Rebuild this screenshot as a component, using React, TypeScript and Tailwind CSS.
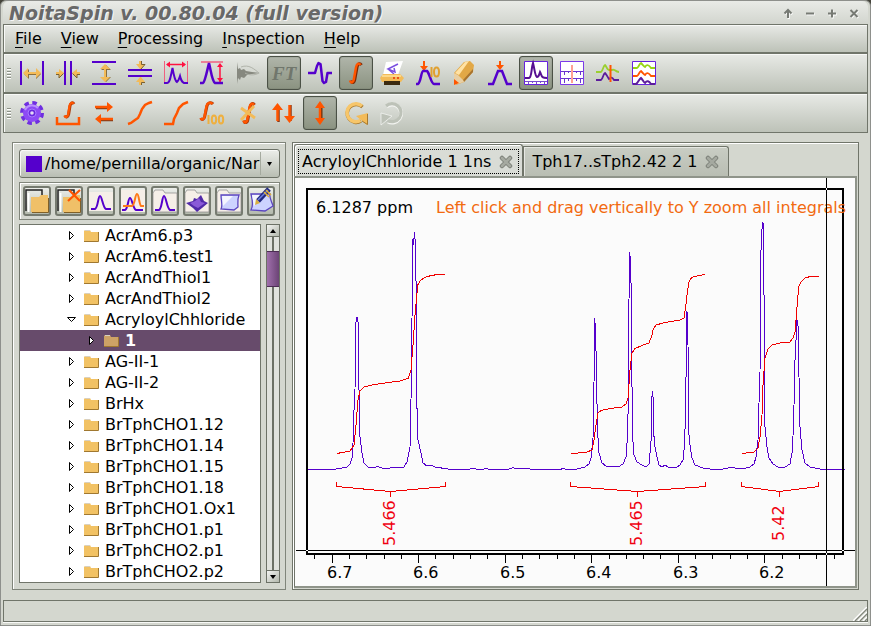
import type { ReactNode } from "react";

const VIOLET = "#5500cc";
const GOLD = "#f3bb58";
const FLAME = "#ff5500";
const CRIMSON = "#ff1040";

function Icon({ children }: { children: ReactNode }) {
  return (
    <svg viewBox="0 0 24 24" className="size-6 shrink-0 overflow-visible" aria-hidden="true" fill="none">
      {children}
    </svg>
  );
}

const integralPath = "M8 19.500c.8 3 3.200 2.500 3.800-1L14 6.500C14.600 2.800 16.800 1.500 18.500 4";

type Tool = { label: string; icon: ReactNode; active?: boolean };

const mainTools: Tool[] = [
  {
    label: "Expand horizontally",
    icon: (
      <>
        <path d="M1 0v24M23 0v24" stroke={VIOLET} strokeWidth="2" />
        <path d="M4 13l5-5v4h7V8l5 5-5 5v-4H9v4z" fill="#8a7040" />
        <path d="M3 12l5-5v4h8V7l5 5-5 5v-4H8v4z" fill={GOLD} />
      </>
    ),
  },
  {
    label: "Compress horizontally",
    icon: (
      <>
        <path d="M9 0v24M15 0v24" stroke={VIOLET} strokeWidth="2" />
        <path d="M0 11h3V8l5 4-5 5v-4H0zM24 11h-3V8l-5 4 5 5v-4h3z" fill={GOLD} />
        <path d="M0 13.500h3V17l4.500-4.500M24 13.500h-3V17l-4.500-4.500" stroke="#7a6030" strokeWidth="1" />
      </>
    ),
  },
  {
    label: "Expand vertically",
    icon: (
      <>
        <path d="M0 1h24M0 23h24" stroke={VIOLET} strokeWidth="2" />
        <path d="M14 4l5 5h-4v7h4l-5 5-5-5h4V9H9z" fill="#8a7040" />
        <path d="M13 3l5 5h-4v8h4l-5 5-5-5h4V8H8z" fill={GOLD} />
      </>
    ),
  },
  {
    label: "Compress vertically",
    icon: (
      <>
        <path d="M0 9h24M0 15h24" stroke={VIOLET} strokeWidth="2" />
        <path d="M11 0h2v3h4l-4 5H12L8 3h3zM11 24h2v-3h4l-4-5H12l-4 5h3z" fill={GOLD} />
        <path d="M13.500 0v3.500H17L13 8M13.500 24v-2.500H17" stroke="#7a6030" />
      </>
    ),
  },
  {
    label: "Zoom region",
    icon: (
      <>
        <path d="M.5 0v22M23.500 0v22" stroke="#f06080" />
        <path d="M3 3.500h18" stroke={CRIMSON} strokeWidth="1.500" />
        <path d="M2 3.500l4-3v6zM22 3.500l-4-3v6z" fill={CRIMSON} />
        <path d="M0 22h3c3 0 3.500-6 5.500-15 1.500 9 2.500 13 4.500 14 1.500-1 2-3 3-6 1 4 1.500 6 4 7h4" stroke={VIOLET} strokeWidth="2" />
      </>
    ),
  },
  {
    label: "Fit height",
    icon: (
      <>
        <path d="M1 1h22" stroke="#f06080" strokeWidth="1.500" />
        <path d="M20 3v18" stroke={CRIMSON} strokeWidth="1.500" />
        <path d="M20 2l3 4h-6zM20 21l3-4h-6z" fill={CRIMSON} />
        <path d="M0 22h3c2-1 4-12 6-20 2 8 3 18 6 20h8" stroke={VIOLET} strokeWidth="2.500" />
      </>
    ),
  },
  {
    label: "Free induction decay",
    icon: (
      <>
        <path d="M1 1v22l1-6 2 2 1-3 3 1 3-3 5-1 8-1-8-1-6-1-2-2-3 1-1-2-2 1z" fill="#86887f" />
        <path d="M5 6c8-3 13 2 18 6-5 3-11 2-14 0" stroke="#b0b3aa" />
      </>
    ),
  },
  {
    label: "Fourier transform",
    active: true,
    icon: (
      <text x="0" y="19" fontFamily="Liberation Serif, serif" fontStyle="italic" fontWeight="bold" fontSize="19" fill="#70766c">
        FT
      </text>
    ),
  },
  {
    label: "Phase correction",
    icon: <path d="M0 12h7l2-7 1.500-3 2 1 2 17 1.500 2 2-1 1.500-9H24" stroke={VIOLET} strokeWidth="2.500" strokeLinejoin="round" />,
  },
  {
    label: "Integrate",
    active: true,
    icon: (
      <>
        <path d={integralPath} transform="translate(-1 0)" stroke="#7a2a08" strokeWidth="3" />
        <path d={integralPath} transform="translate(-2 0)" stroke={FLAME} strokeWidth="2.500" />
      </>
    ),
  },
  {
    label: "Print",
    icon: (
      <>
        <path d="M6 1l17-1-5 14H3z" fill="#fff" />
        <path d="M18 3l-10 5 7 3-1-4M8 8l6 5" stroke="#7a50e0" strokeWidth="1.500" />
        <path d="M3 13h17l4 4-3 4H2l-2-4z" fill={GOLD} />
        <path d="M2 15h19" stroke="#ffe29a" strokeWidth="1.500" />
        <path d="M13 17h2M17 17h2" stroke="#e83000" strokeWidth="1.500" />
        <path d="M4 20h16v4H4z" fill="#3b2a10" />
      </>
    ),
  },
  {
    label: "Peak picking threshold",
    icon: (
      <>
        <path d="M8 0v6" stroke={FLAME} strokeWidth="2" />
        <path d="M4 5h8L8 10z" fill={FLAME} />
        <path d="M0 23h2c3-2 3-12 5-13h4c3 3 4 13 7 13h6" stroke={VIOLET} strokeWidth="2.500" />
        <path d="M15.500 6V16" stroke="#e0a030" strokeWidth="2" />
        <ellipse cx="20.500" cy="11" rx="2.500" ry="4.500" stroke="#e0a030" strokeWidth="2" />
      </>
    ),
  },
  {
    label: "Annotate",
    icon: (
      <>
        <path d="M2 12L12 1l6-1 4 4-1 7-9 10-8 3z" fill="#e2a846" />
        <path d="M3 12L13 1l4-1L7 14z" fill="#ffe2a4" />
        <path d="M11 19L21 8v3l-9 10z" fill="#a87430" />
        <path d="M2 12l4 2 5 5 1 2-10 3z" fill="#e8cfa4" />
        <path d="M2 18l5 4-5 2z" fill={FLAME} />
      </>
    ),
  },
  {
    label: "Pick peak",
    icon: (
      <>
        <path d="M12 0v5" stroke={FLAME} strokeWidth="2" />
        <path d="M8 4h8l-4 5z" fill={FLAME} />
        <path d="M0 23h5l5-13h4l5 13h5" stroke={VIOLET} strokeWidth="2.500" />
      </>
    ),
  },
  {
    label: "Spectrum with scale",
    active: true,
    icon: (
      <>
        <path d="M.5.5h23v23H.5z" fill="#fff" stroke="#6622dd" />
        <path d="M1 17h4c3-1 2-9 4-15 2 8 2 13 4 14 2 0 2-2 3-5 2 4 1 6 7 6" stroke="#560f91" strokeWidth="2" />
        <path d="M1 20.500h22M4.500 20v3M8.500 20v2M12.500 20v3M16.500 20v2M20.500 20v3" stroke="#7a4ad0" />
      </>
    ),
  },
  {
    label: "Cursor scale",
    icon: (
      <>
        <path d="M.5.500h23v23H.5z" fill="#fff" stroke="#7b3be8" />
        <path d="M1 10.500h22M1 17.500h22M4.500 10v4M8.500 10v2M16.500 10v2M20.500 10v4M4.500 18v4M8.500 18v2M16.500 18v2M20.500 18v4" stroke="#6a35d0" />
        <path d="M12 4v18" stroke="#ffa090" strokeWidth="2" />
      </>
    ),
  },
  {
    label: "Align spectra",
    icon: (
      <>
        <path d="M0 11h5c2-1 2-6 4-7 2 2 2 5 4 5h3c2-2 3 2 7 2" stroke="#9ad030" strokeWidth="1.800" />
        <path d="M0 19h5c2-1 2-6 4-7 2 2 3 5 4 6 2-2 3-2 5 1h5" stroke="#5c1c9c" strokeWidth="1.800" />
        <path d="M14.500 4v17" stroke={FLAME} strokeWidth="2" />
      </>
    ),
  },
  {
    label: "Stack spectra",
    icon: (
      <>
        <path d="M.5.500h23v23H.5z" fill="#fff" stroke="#6622dd" />
        <path d="M1 7h4c2-1 2-4 4-5 2 2 3 4 4 4 2-3 4-2 6 1h4" stroke="#95d514" strokeWidth="1.800" />
        <path d="M1 15h4c2-1 2-4 4-5 2 2 3 4 4 4 2-3 4-2 6 1h4" stroke={FLAME} strokeWidth="1.800" />
        <path d="M1 23h3c2-1 3-5 5-6 2 2 3 5 4 5 2-3 4-2 6 1h4" stroke="#5c1c9c" strokeWidth="2" />
      </>
    ),
  },
];

const integralTools: Tool[] = [
  {
    label: "Integral settings",
    icon: (
      <>
        <circle cx="12" cy="12" r="9.500" stroke="#6f2fe0" strokeWidth="5" strokeDasharray="4.200 3.260" />
        <circle cx="12" cy="12" r="9" fill="#8d4af5" />
        <path d="M5 9a8 8 0 0 1 13-2" stroke="#ba91ff" strokeWidth="2" />
        <circle cx="12" cy="12" r="4" fill="#6a28dd" stroke="#a77aff" />
        <circle cx="12" cy="12" r="1.800" fill="#e3dbf5" />
      </>
    ),
  },
  {
    label: "Integrate region",
    icon: (
      <>
        <path d="M1 16v7h22v-7" stroke={FLAME} strokeWidth="2.500" />
        <path d="M9 14.500c1 2.500 3 1.500 3.600-1L14 5c.6-3 2.500-4.500 4-2" stroke="#a83808" strokeWidth="3" />
        <path d="M8.500 14.500c1 2.500 3 1.500 3.600-1L13.500 5c.6-3 2.500-4.500 4-2" stroke={FLAME} strokeWidth="2.300" />
      </>
    ),
  },
  {
    label: "Swap integrals",
    icon: (
      <>
        <path d="M4 7h14M7 19h14" stroke="#7a3a18" strokeWidth="2.500" />
        <path d="M3 6h14M8 18h13" stroke={FLAME} strokeWidth="2.500" />
        <path d="M15 1l6 5-6 5zM9 13l-6 5 6 5z" fill={FLAME} />
      </>
    ),
  },
  {
    label: "Slope correction",
    icon: <path d="M0 23l3-1 4-3 3-2 2-4 2-5 3-4 4-2 3-1" stroke={FLAME} strokeWidth="2.500" />,
  },
  {
    label: "Bias correction",
    icon: <path d="M0 23h9l1-5 3-6 2-5 4-4 5-2" stroke={FLAME} strokeWidth="2.500" />,
  },
  {
    label: "Normalise to 100",
    icon: (
      <>
        <path d="M1 17c.8 2.500 3 1.500 3.600-1L7 5c.6-3 4-4.500 6-2" stroke="#a83808" strokeWidth="3" />
        <path d="M.8 17c.8 2.500 3 1.500 3.600-1L6.500 5c.6-3 4-4.500 6-2" stroke={FLAME} strokeWidth="2.500" />
        <path d="M8.500 14v9" stroke="#eeb040" strokeWidth="2" />
        <ellipse cx="14" cy="18.500" rx="2.200" ry="4" stroke="#eeb040" strokeWidth="2" />
        <ellipse cx="21" cy="18.500" rx="2.200" ry="4" stroke="#eeb040" strokeWidth="2" />
      </>
    ),
  },
  {
    label: "Delete integral",
    icon: (
      <>
        <path d={integralPath} stroke="#a83808" strokeWidth="3.200" />
        <path d={integralPath} transform="translate(-.5 0)" stroke={FLAME} strokeWidth="2.500" />
        <path d="M5 7l14 10M18 5L5 19" stroke={GOLD} strokeWidth="2.800" />
      </>
    ),
  },
  {
    label: "Sort integrals",
    icon: (
      <>
        <path d="M6.500 5v16M18.500 4v16" stroke="#8a3a18" strokeWidth="2.500" />
        <path d="M5.500 5v15M17.500 4v15" stroke={FLAME} strokeWidth="2.500" />
        <path d="M5.500 2l5.500 7H0zM17.500 22L12 15h11z" fill={FLAME} />
      </>
    ),
  },
  {
    label: "Scale all integrals",
    active: true,
    icon: (
      <>
        <path d="M13 5v15" stroke="#68300c" strokeWidth="3" />
        <path d="M12 5v14" stroke={FLAME} strokeWidth="2.500" />
        <path d="M12 0l5 7H7zM12 24l5-7H7z" fill={FLAME} />
      </>
    ),
  },
  {
    label: "Undo",
    icon: (
      <>
        <path d="M18.500 6A9 9 0 1 0 17 20" stroke="#a77a30" strokeWidth="3.500" />
        <path d="M18 5A9 9 0 1 0 16.500 19.500" stroke="#f7c66a" strokeWidth="3.500" />
        <path d="M12 15l12-3-1 12z" fill={GOLD} />
        <path d="M23.500 13v10.500L18 20" stroke="#a77a30" />
      </>
    ),
  },
  {
    label: "Redo",
    icon: (
      <>
        <path d="M6.500 5.500A9 9 0 1 1 8 20.500" stroke="#f3f4f1" strokeWidth="4" />
        <path d="M6 5A9 9 0 1 1 7.500 19.500" stroke="#bdc2b8" strokeWidth="3.200" />
        <path d="M12 15L1 12v12z" fill="#bdc2b8" stroke="#f3f4f1" strokeWidth=".8" />
      </>
    ),
  },
];

function ToolBar({ tools, name }: { tools: Tool[]; name: string }) {
  return (
    <div role="toolbar" aria-label={name} className="flex h-10 items-center border border-[#70756a] bg-linear-to-b from-[#e8eae6] to-[#bdc2b8] shadow-[inset_1px_1px_0_#f8f9f7]">
      <div className="flex w-[11px] flex-col gap-px pl-[3px]">
        {[0, 1, 2, 3].map((n) => (
          <span key={n} className="h-px w-1 border-b border-white bg-[#8d9287] pb-px" />
        ))}
      </div>
      <div className="flex gap-0.5">
        {tools.map((tool) => (
          <button
            key={tool.label}
            type="button"
            aria-label={tool.label}
            aria-pressed={!!tool.active}
            className={
              tool.active
                ? "flex h-[34px] w-[34px] items-center justify-center rounded-[3px] border border-[#4b5146] bg-linear-to-b from-[#b0b5aa] to-[#8b9381] shadow-[inset_0_0_1px_#4b5146]"
                : "flex h-[34px] w-[34px] items-center justify-center"
            }
          >
            <Icon>{tool.icon}</Icon>
          </button>
        ))}
      </div>
    </div>
  );
}

const folderBack = (
  <>
    <path d="M1 22V1h16v5" stroke="#222" strokeWidth="1.500" />
    <path d="M3.500 4v19" stroke="#fff" strokeWidth="2" />
    <path d="M6 8h8l2-2h7v17H6z" fill="#f0c068" />
    <path d="M23.500 9v14.500H7" stroke="#806028" />
  </>
);

const browserTools: Tool[] = [
  { label: "Show folders", icon: folderBack },
  {
    label: "Close folder",
    icon: (
      <>
        {folderBack}
        <path d="M12 1l11 11M23 1L11 12" stroke={FLAME} strokeWidth="2.200" />
      </>
    ),
  },
  {
    label: "Single spectrum",
    icon: (
      <>
        <path d="M0 3h24v19H0z" fill="#f6efe8" />
        <path d="M2 20h4c3-1 3-13 5-13s3 12 6 13h5" stroke={VIOLET} strokeWidth="2" />
      </>
    ),
  },
  {
    label: "Overlay spectra",
    icon: (
      <>
        <path d="M0 1h24v22H0z" fill="#f6efe8" />
        <path d="M1 21h3c3-1 3-12 5-12s3 11 6 12h7" stroke={VIOLET} strokeWidth="2" />
        <path d="M2 17h9c3-1 3-12 5-12s2 10 4 12h3" stroke="#ff7a18" strokeWidth="2" />
      </>
    ),
  },
  {
    label: "Folder spectrum",
    icon: (
      <>
        <path d="M0 4l2-3h8l2 3h12v19H0z" fill="#f6efe8" stroke="#888" strokeWidth=".7" />
        <path d="M2 21h4c3-1 3-14 5-14s3 13 6 14h5" stroke={VIOLET} strokeWidth="2" />
      </>
    ),
  },
  {
    label: "Two-dimensional spectrum",
    icon: (
      <>
        <path d="M0 4l2-3h8l2 3h12v19H0z" fill="#f6efe8" stroke="#888" strokeWidth=".7" />
        <path d="M1 14l7-2 1-3 3 1 4-4 3 6 4 2-6 5-5 4-4-4z" fill="#512aa8" />
        <path d="M5 14l5-2 4-3 2 4 4 1-7 5-4-2z" fill="#8a5ad8" />
      </>
    ),
  },
  {
    label: "Notes",
    icon: (
      <>
        <path d="M0 4l2-3h8l2 3h12v19H0z" fill="#f6efe8" stroke="#888" strokeWidth=".7" />
        <path d="M4 6h18c-2 5-1 8-1 12l-4 3-13-1c2-4 0-8 0-14z" fill="#cdd3ff" stroke="#5b45c0" strokeWidth="1.300" />
        <path d="M5 7h11L6 17z" fill="#f4f5ff" />
      </>
    ),
  },
  {
    label: "Edit notes",
    icon: (
      <>
        <path d="M2 5h19c-1 4 2 8 3 12l-8 5-14-1c3-5 1-11 0-16z" fill="#cdd3ff" stroke="#5b45c0" strokeWidth="1.300" />
        <path d="M3 6h12L5 17z" fill="#f4f5ff" />
        <path d="M20 0L9 12" stroke="#222a80" strokeWidth="5" />
        <path d="M19 1L9 11" stroke="#6f80e0" strokeWidth="1.500" />
        <path d="M17 1l5 5M15 3l5 5" stroke="#e0b030" strokeWidth="1.500" />
        <path d="M7 10l4 4-5 2z" fill="#d8b040" />
      </>
    ),
  },
];

type Entry = { name: string; open?: boolean; child?: boolean };
const entries: Entry[] = [
  { name: "AcrAm6.p3" },
  { name: "AcrAm6.test1" },
  { name: "AcrAndThiol1" },
  { name: "AcrAndThiol2" },
  { name: "AcryloylChhloride", open: true },
  { name: "1", child: true },
  { name: "AG-II-1" },
  { name: "AG-II-2" },
  { name: "BrHx" },
  { name: "BrTphCHO1.12" },
  { name: "BrTphCHO1.14" },
  { name: "BrTphCHO1.15" },
  { name: "BrTphCHO1.18" },
  { name: "BrTphCHO1.Ox1" },
  { name: "BrTphCHO1.p1" },
  { name: "BrTphCHO2.p1" },
  { name: "BrTphCHO2.p2" },
];

function TreeRow({ entry }: { entry: Entry }) {
  return (
    <li role="treeitem" aria-selected={!!entry.child} aria-expanded={!!entry.open}>
      <button
        type="button"
        className={
          entry.child
            ? "flex h-[21px] w-full items-center bg-[#674b6b] pl-[66px] text-left font-bold text-white"
            : "flex h-[21px] w-full items-center pl-[46px] text-left"
        }
      >
        <svg viewBox="0 0 12 11" className="mr-1.5 h-[11px] w-3 shrink-0" aria-hidden="true">
          {entry.open ? (
            <path d="M1.500 3.500h8L5.500 7.500z" fill="#fff" stroke="#000" />
          ) : (
            <path d="M3.500 1.500v8l4-4z" fill="#fff" stroke="#000" />
          )}
        </svg>
        <svg viewBox="0 0 15 13" className="mr-1.5 h-[13px] w-[15px] shrink-0" aria-hidden="true">
          <path d="M0 2l1-1h5l1 2h7v9H0z" fill={entry.child ? "#cda266" : "#f2c264"} />
          <path d="M1 1.500h5" stroke="#d8d0c0" />
          <path d="M0 12.500h14.500V3" fill="none" stroke="#a07830" />
        </svg>
        {entry.name}
      </button>
    </li>
  );
}

const spectrum =
  "307,469 336,469 342,468 347,467 350,464 352,458 353,443 353.500,420 355,390 355.500,325 357,317 358.500,325 359,390 360,437 362,453 364,463 368,467 373,468 378,466.500 382,468 390,468 398,467.500 404,467 407,462 410,447 411,400 412,320 412.500,239 413.500,245 414.500,232 415.300,243 416.500,307 416.700,398 418,440 421,453 423,463 427,466 431,465 435,467 448,469 470,469 474,468.500 480,470 486,468.500 490,469.500 508,469.500 513,467.500 517,469 526,468.500 534,469.500 560,469.500 563,468.500 567,469.500 577,469 585,467 589,464 591,458 593,438 594,383 594.700,318 595.700,333 596.700,390 597.700,433 599,453 602,463 606,466 618,467 623,464 626,457 627.700,433 628.500,385 629.300,252 630.500,258 631.300,297 632,387 632.500,435 634,455 637,462 642,465 646,467 649,464 650,453 651.300,437 651.500,402 652.500,391 653.500,402 653.700,433 655,447 657,457 659,465 662,467 665,465 668,467 677,467 680,465 683,460 684.700,443 685.700,398 687,311 688,345 688.700,432 690,445 692,458 695,465 703,468 710,469 723,469 731,467.500 742,469 750,467 754,464 756,457 758,440 759,403 760,375 760.500,265 761.500,237 762.500,222 763.500,225 764,295 765,427 767,447 769,458 773,464 778,467 785,467 790,464 792,453 793.500,427 795,360 797,320 798.300,328 799,377 800,427 802,450 805,463 810,467 820,469 845,469";

const integralCurves = [
  "337,453.500 350,451 354,445 356,425 358,400 360,391 364,387 372,385 385,383 400,381 408,378.500 411,370 413,345 415,315 416.700,297 417.700,285 420.700,280 427,276.500 437,274.500 445,274",
  "571,453.500 586,452.500 592,450 594,440 596,425 598,413 601,410.500 610,408.500 622,407 626,404 628,398 630,370 632,353 635,348.500 642,345.500 649,343 652,335 653,330 656,325 665,322.500 680,320 684,318 685.700,307 687.300,293 689,282 691.700,277.500 697,276 705,274.500",
  "742,453.500 754,452 758,448 760,437 762,415 763,385 765,358 768,349 772,345 780,343 790,342 793,338 795,332 796,320 797,307 798.700,287 801,282 805,278 812,276 819,276",
];

const brackets = [
  { from: 336.5, mid: 390.5, to: 445.5, value: "5.466", x: 395, y: 546 },
  { from: 570.5, mid: 637.5, to: 705.5, value: "5.465", x: 642, y: 546 },
  { from: 741.5, mid: 779.5, to: 818.5, value: "5.42", x: 784, y: 541 },
];

const majorTicks = [
  { x: 332.5, label: "6.7" },
  { x: 418.5, label: "6.6" },
  { x: 505.5, label: "6.5" },
  { x: 591.5, label: "6.4" },
  { x: 678.5, label: "6.3" },
  { x: 764.5, label: "6.2" },
];
const minorTicks = [314.5, 349.5, 366.5, 384.5, 401.5, 435.5, 453.5, 470.5, 487.5, 522.5, 539.5, 557.5, 574.5, 609.5, 626.5, 643.5, 660.5, 695.5, 712.5, 730.5, 747.5, 782.5, 799.5, 816.5, 834.5];

function Plot() {
  return (
    <svg
      viewBox="295 178 560 408"
      className="block h-auto w-full bg-[#fbfbfb] font-['DejaVu_Sans',sans-serif] text-[16px]"
      role="img"
      aria-label="NMR spectrum with integrals"
      fill="none"
      shapeRendering="crispEdges"
    >
      <polyline points={spectrum} stroke={VIOLET} />
      {integralCurves.map((points) => (
        <polyline key={points} points={points} stroke="#f00000" />
      ))}
      {brackets.map((b) => (
        <g key={b.value}>
          <path d={`M${b.from} 481.500V486.500L${b.mid} 491.500L${b.to} 486.500V481.500M${b.mid} 491.500V496.500`} stroke="#f00000" />
          <text transform={`translate(${b.x} ${b.y}) rotate(-90)`} fill="#f00010">{b.value}</text>
        </g>
      ))}
      <rect x="307" y="189" width="536" height="365" stroke="#000" strokeWidth="2" />
      {majorTicks.map((t) => (
        <g key={t.label}>
          <path d={`M${t.x} 555v8`} stroke="#000" />
          <text x={t.x - 5.5} y="578" fill="#000">{t.label}</text>
        </g>
      ))}
      {minorTicks.map((x) => (
        <path key={x} d={`M${x} 555v4`} stroke="#000" />
      ))}
      <text x="316" y="213" fill="#000">6.1287 ppm</text>
      <text x="436" y="213" fill="#f26a10">Left click and drag vertically to Y zoom all integrals</text>
      <path d="M296 550.500H855M826.500 178V586" stroke="#000" />
      <path d="M306 550.500h2M842 550.500h2M826.500 188v2M826.500 553v2" stroke="#fff" />
    </svg>
  );
}

function CloseMark() {
  return (
    <svg viewBox="0 0 14 14" className="size-3.5" aria-hidden="true" fill="none">
      <path d="M3 3l8 8M11 3l-8 8" stroke="#7e827a" strokeWidth="4.500" strokeLinecap="round" />
      <path d="M3 3l8 8M11 3l-8 8" stroke="#a5a9a0" strokeWidth="2.500" strokeLinecap="round" />
    </svg>
  );
}

const menus = ["File", "View", "Processing", "Inspection", "Help"];

const windowButtons = [
  { label: "Shade", d: "M6 11V4M2.500 6.500L6 3l3.500 3.500" },
  { label: "Minimise", d: "M2 6.500h8" },
  { label: "Maximise", d: "M2 6.500h8M6 2.500v8" },
  { label: "Close", d: "M2.500 3l7 7M9.500 3l-7 7" },
];

export default function App() {
  return (
    <div className="bg-[#45453c]">
      <div className="flex min-h-screen flex-col rounded-t-md border border-[#8e908c] bg-[#d4d7cf] px-0.5 font-['DejaVu_Sans',sans-serif] text-[16px] leading-5 text-black">
        <header className="flex h-[23px] items-center rounded-t-md bg-linear-to-b from-[#e9ebe7] to-[#d2d5ce] pr-1 pl-1.5">
          <h1 className="flex-1 truncate text-[19px] font-bold text-[#686868] italic [text-shadow:1px_1px_0_#f6f6f6]">NoitaSpin v. 00.80.04 (full version)</h1>
          <div className="flex gap-2.5 pr-1">
            {windowButtons.map((b) => (
              <button key={b.label} type="button" aria-label={b.label} className="size-3">
                <svg viewBox="0 0 12 12" className="size-3" fill="none" aria-hidden="true">
                  <path d={b.d} stroke="#fff" strokeWidth="2" transform="translate(.7 .9)" />
                  <path d={b.d} stroke="#777a74" strokeWidth="2" />
                </svg>
              </button>
            ))}
          </div>
        </header>

        <nav aria-label="Main menu" className="flex h-[29px] items-center gap-[19px] border border-[#70756a] bg-linear-to-b from-[#e8eae6] to-[#bdc2b8] pl-[11px] shadow-[inset_1px_1px_0_#f8f9f7]">
          {menus.map((m) => (
            <button key={m} type="button">
              <span className="underline decoration-1 underline-offset-3">{m[0]}</span>
              {m.slice(1)}
            </button>
          ))}
        </nav>
        <ToolBar tools={mainTools} name="Spectrum tools" />
        <ToolBar tools={integralTools} name="Integral tools" />

        <main className="flex flex-1 gap-1.5 px-[9px] pt-[9px] pb-2.5">
          <aside className="flex w-[274px] shrink-0 flex-col border border-[#80857a] py-1.5 pr-[5px] pl-1.5 shadow-[inset_1px_1px_0_#fff]">
            <div className="flex h-[29px] shrink-0 items-center rounded-[3px] border border-[#6c7166] bg-linear-to-b from-[#eceeea] to-[#b9beb3] pl-1.5 shadow-[inset_1px_1px_0_#f8f9f7]">
              <span className="size-4 shrink-0 bg-[#5500cc]" />
              <select aria-label="Data folder" className="h-full min-w-0 flex-1 appearance-none bg-transparent pl-[3px]">
                <option>/home/pernilla/organic/Nar</option>
              </select>
              <span className="h-[23px] w-px bg-[#a5aa9f]" />
              <svg viewBox="0 0 18 8" className="h-2 w-[18px]" aria-hidden="true">
                <path d="M6 2h5L8.500 6z" fill="#000" />
              </svg>
            </div>

            <div role="toolbar" aria-label="Browser tools" className="mt-1 flex h-[38px] shrink-0 items-center gap-1 border border-[#80857a] pl-[3px] shadow-[inset_1px_1px_0_#fff]">
              {browserTools.map((tool) => (
                <button
                  key={tool.label}
                  type="button"
                  aria-label={tool.label}
                  className="flex h-[30px] w-7 items-center justify-center rounded-[3px] border-2 border-[#757a6f] bg-linear-to-b from-[#eceeea] to-[#b4baad]"
                >
                  <Icon>{tool.icon}</Icon>
                </button>
              ))}
            </div>

            <div className="mt-1 flex flex-1 gap-[5px]">
              <ul role="tree" aria-label="Folders" className="min-w-0 flex-1 border border-[#70756a] bg-white">
                {entries.map((entry) => (
                  <TreeRow key={entry.name} entry={entry} />
                ))}
              </ul>
              <div className="flex w-3.5 flex-col border border-[#6c7166]">
                <button type="button" aria-label="Scroll up" className="flex h-3 items-center justify-center border-b border-[#6c7166] bg-linear-to-br from-[#f3f4f2] to-[#b3b8ad]">
                  <svg viewBox="0 0 6 4" className="h-1 w-1.5" aria-hidden="true"><path d="M0 4h6L3 0z" fill="#000" /></svg>
                </button>
                <div className="flex h-3.5 justify-center bg-[#e0e2dd]"><span className="w-0.5 bg-[#6c7166]" /></div>
                <div className="h-9 border-y border-[#4c2c55] bg-linear-to-r from-[#a070ac] to-[#6c4476]" />
                <div className="flex flex-1 justify-center bg-[#e0e2dd]"><span className="w-0.5 bg-[#6c7166]" /></div>
                <button type="button" aria-label="Scroll down" className="flex h-3 items-center justify-center border-t border-[#6c7166] bg-linear-to-br from-[#f3f4f2] to-[#b3b8ad]">
                  <svg viewBox="0 0 6 4" className="h-1 w-1.5" aria-hidden="true"><path d="M0 0h6L3 4z" fill="#000" /></svg>
                </button>
              </div>
            </div>
          </aside>

          <section className="flex min-w-0 flex-1 flex-col border border-[#70756a] p-px shadow-[inset_1px_1px_0_#fff]">
            <div role="tablist" className="flex h-8 items-end">
              <div className="z-10 flex h-8 items-center rounded-t-[3px] border border-b-0 border-[#70756a] bg-[#d9dcd6] px-[3px] pt-0.5 shadow-[inset_1px_1px_0_#fff]">
                <div className="flex h-[25px] items-center border border-dotted border-black pr-[5px] pl-[3px]">
                  <button type="button" role="tab" aria-selected="true">AcryloylChhloride 1 1ns</button>
                  <button type="button" aria-label="Close AcryloylChhloride" className="ml-2"><CloseMark /></button>
                </div>
              </div>
              <div className="flex h-[30px] items-center rounded-tr-[3px] border border-b-0 border-[#70756a] bg-linear-to-b from-[#c9cdc4] to-[#b9beb3] pr-[9px] pl-2 shadow-[inset_1px_1px_0_#e6e8e3]">
                <button type="button" role="tab" aria-selected="false">Tph17..sTph2.42 2 1</button>
                <button type="button" aria-label="Close Tph17" className="ml-[7px]"><CloseMark /></button>
              </div>
            </div>
            <div className="flex-1 border-t-2 border-r-2 border-b-2 border-l border-[#70756a] border-t-[#8f948a] border-r-[#8f948a] border-b-[#8f948a] bg-[#fbfbfb]">
              <Plot />
            </div>
          </section>
        </main>

        <footer className="mb-[3px] flex h-[22px] items-end justify-end border border-[#70756a] bg-[#d4d7cf] shadow-[0_1px_0_#f8f9f7]">
          <svg viewBox="0 0 14 14" className="size-3.5" aria-hidden="true" fill="none">
            <path d="M0 14L14 0M5 14l9-9M10 14l4-4" stroke="#fff" strokeWidth="1.500" />
            <path d="M2 14L14 2M7 14l7-7M12 14l2-2" stroke="#80857a" strokeWidth="1.200" />
          </svg>
        </footer>
      </div>
    </div>
  );
}
